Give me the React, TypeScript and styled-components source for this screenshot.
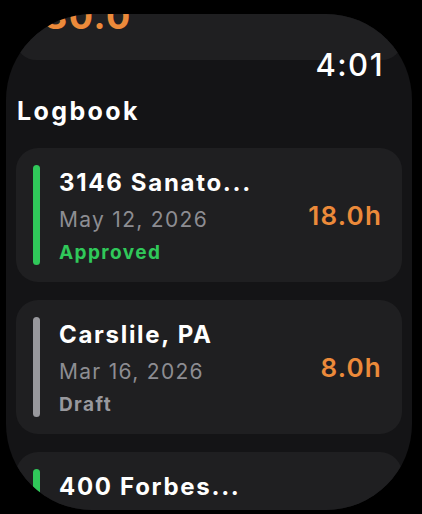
import styled, { createGlobalStyle } from "styled-components";

type Status = "Approved" | "Draft";

type Entry = {
  title: string;
  date: string;
  status: Status;
  hours: string;
};

const entries: Entry[] = [
  { title: "3146 Sanato...", date: "May 12, 2026", status: "Approved", hours: "18.0h" },
  { title: "Carslile, PA", date: "Mar 16, 2026", status: "Draft", hours: "8.0h" },
  { title: "400 Forbes...", date: "Feb 02, 2026", status: "Approved", hours: "6.0h" },
];

const statusColors: Record<Status, string> = {
  Approved: "#30c85a",
  Draft: "#98989d",
};

const App = () => {
  return (
    <>
      <GlobalStyle />
      <WatchCase>
        <Screen>
          <Scroller>
            {/* summary card, mostly scrolled away */}
            <SummaryCard>
              <SummaryValue>30.0</SummaryValue>
            </SummaryCard>

            <Heading>Logbook</Heading>

            <List>
              {entries.map((entry) => (
                <Card key={entry.title}>
                  <StatusBar $color={statusColors[entry.status]} />
                  <Info>
                    <Title>{entry.title}</Title>
                    <DateText>{entry.date}</DateText>
                    <StatusText $color={statusColors[entry.status]}>{entry.status}</StatusText>
                  </Info>
                  <Hours>{entry.hours}</Hours>
                </Card>
              ))}
            </List>
          </Scroller>
        </Screen>
        <Clock>4:01</Clock>
      </WatchCase>
    </>
  );
};

export default App;

const GlobalStyle = createGlobalStyle`
  html, body {
    margin: 0;
    padding: 0;
    background: #000;
  }

  body {
    font-family: Inter, "Noto Sans", sans-serif;
    -webkit-font-smoothing: antialiased;
  }
`;

const WatchCase = styled.div`
  position: relative;
  width: 422px;
  height: 514px;
  box-sizing: border-box;
  padding: 14px 10px 0 6px;
  overflow: hidden;
  background: #000;
`;

const Screen = styled.div`
  position: relative;
  width: 406px;
  height: 496px;
  border-radius: 86px;
  background: #141416;
  overflow: hidden;
`;

const Scroller = styled.div`
  display: flex;
  flex-direction: column;
  padding: 0 10px;
  margin-top: -50px;
`;

const SummaryCard = styled.div`
  height: 96px;
  box-sizing: border-box;
  padding: 34px 0 0 28px;
  border-radius: 20px;
  background: #1f1f21;
`;

const SummaryValue = styled.div`
  font-size: 36px;
  line-height: 36px;
  font-weight: 700;
  letter-spacing: 1.5px;
  color: #ec8a3a;
`;

const Heading = styled.h1`
  margin: 36px 0 22px 1px;
  font-size: 25px;
  line-height: 30px;
  font-weight: 700;
  letter-spacing: 2.4px;
  color: #fff;
`;

const List = styled.div`
  display: flex;
  flex-direction: column;
  gap: 18px;
`;

const Card = styled.div`
  display: flex;
  align-items: center;
  gap: 19px;
  height: 134px;
  box-sizing: border-box;
  padding: 17px 20px 17px 17px;
  border-radius: 22px;
  background: #1f1f21;
`;

const StatusBar = styled.div<{ $color: string }>`
  align-self: stretch;
  width: 7px;
  border-radius: 4px;
  background: ${({ $color }) => $color};
`;

const Info = styled.div`
  flex: 1;
  align-self: stretch;
  display: flex;
  flex-direction: column;
  min-width: 0;
`;

const Title = styled.div`
  font-size: 24px;
  line-height: 36px;
  font-weight: 700;
  letter-spacing: 1.7px;
  color: #fff;
  white-space: nowrap;
`;

const DateText = styled.div`
  margin-top: 2px;
  font-size: 21px;
  line-height: 33px;
  font-weight: 400;
  letter-spacing: 1.3px;
  color: #8d8d92;
`;

const StatusText = styled.div<{ $color: string }>`
  margin-top: 1px;
  font-size: 19px;
  line-height: 31px;
  font-weight: 700;
  letter-spacing: 1.4px;
  color: ${({ $color }) => $color};
`;

const Hours = styled.div`
  font-size: 26px;
  font-weight: 600;
  letter-spacing: 1.2px;
  color: #ec8a3a;
`;

const Clock = styled.div`
  position: absolute;
  top: 49px;
  right: 38px;
  font-size: 31px;
  line-height: 31px;
  font-weight: 500;
  letter-spacing: 1.5px;
  color: #fff;
`;
